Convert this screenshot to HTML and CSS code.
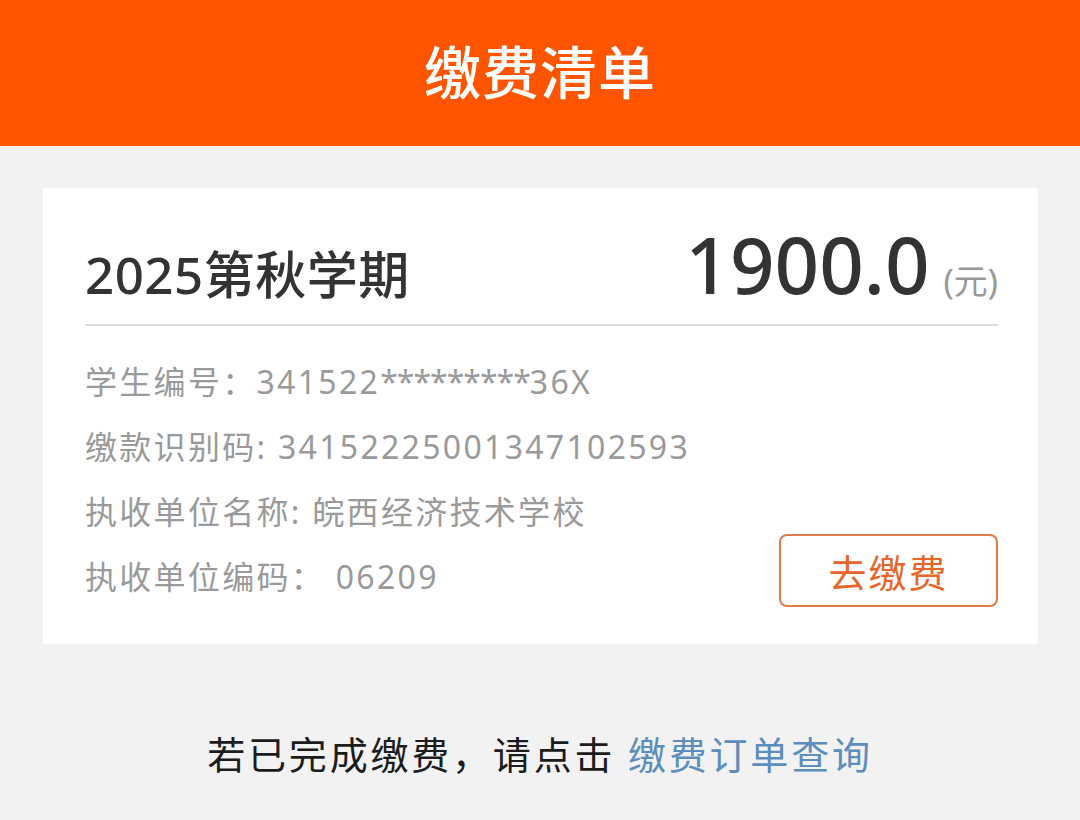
FILE: index.html
```html
<!DOCTYPE html>
<html lang="zh-CN">
<head>
    <meta charset="UTF-8">
    <meta name="viewport" content="width=device-width, initial-scale=1.0">
    <title>缴费清单</title>
    <link rel="stylesheet" href="styles.css">
</head>
<body>

    <header class="top-bar">
        <h1>缴费清单</h1>
    </header>

    <div class="bill-card">
        <div class="bill-head">
            <div class="term">2025第秋学期</div>
            <div class="amount">1900.0<span class="unit">(元)</span></div>
        </div>
        <div class="bill-body">
            <div class="bill-info">
                <p>学生编号：341522<span class="mask">*********</span>36X</p>
                <p>缴款识别码: 34152225001347102593</p>
                <p>执收单位名称: 皖西经济技术学校</p>
                <p>执收单位编码： 06209</p>
            </div>
            <button class="pay-btn">去缴费</button>
        </div>
    </div>

    <p class="order-tip">若已完成缴费，请点击 <a href="#" class="order-link">缴费订单查询</a></p>

</body>
</html>
```

FILE: styles.css
```css
body {
    margin: 0;
    background-color: #f2f2f2;
    font-family: "Noto Sans", "Noto Sans CJK SC", sans-serif;
    color: #333;
}

.top-bar {
    background: #ff5500;
    height: 146px;
    box-sizing: border-box;
    padding-bottom: 8px;
    display: flex;
    justify-content: center;
    align-items: center;
}
.top-bar h1 {
    margin: 0;
    color: #fff;
    font-size: 57px;
    font-weight: 500;
    letter-spacing: 1px;
}

/* tarjeta principal */
.bill-card {
    background: #fff;
    margin: 42px 42px 0 43px;
    padding: 0 40px 35px 42px;
}
.bill-head {
    height: 138px;
    display: flex;
    justify-content: space-between;
    align-items: baseline;
    border-bottom: 2px solid #dedede;
    box-sizing: border-box;
}
.term {
    font-size: 51px;
    font-weight: 500;
    letter-spacing: 0.5px;
    color: #333;
    line-height: 152px;
}
.amount {
    font-size: 78px;
    font-weight: 500;
    color: #333;
    line-height: 152px;
}
.unit {
    font-size: 34px;
    color: #999;
    margin-left: 14px;
    font-weight: 400;
}

.bill-body {
    display: flex;
    justify-content: space-between;
    align-items: flex-end;
    padding-top: 23px;
}
.bill-info p {
    margin: 0;
    font-size: 32px;
    line-height: 65px;
    color: #9a9a9a;
    letter-spacing: 2.3px;
}
.mask {
    letter-spacing: -1px;
}
.pay-btn {
    width: 219px;
    height: 73px;
    margin-bottom: 2px;
    background: #fff;
    border: 2px solid #e07b4c;
    border-radius: 8px;
    color: #e8662a;
    font-family: "Noto Sans CJK SC", sans-serif;
    font-size: 38px;
    letter-spacing: 2px;
    cursor: pointer;
}

.order-tip {
    margin: 81px 0 0;
    text-align: center;
    font-size: 38px;
    letter-spacing: 2.8px;
    color: #1c1c1c;
}
.order-link {
    color: #5b8dbd;
    text-decoration: none;
}
```
